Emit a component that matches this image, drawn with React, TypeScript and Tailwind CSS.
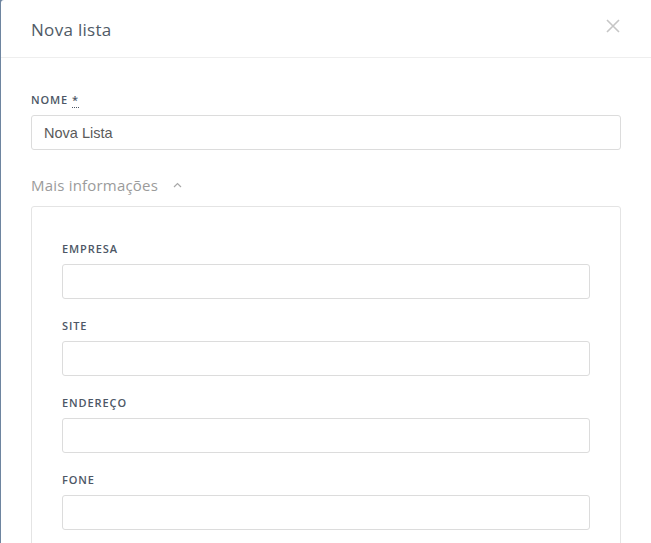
import React from 'react'

const labelClass = "block text-[11px] leading-[16px] font-semibold uppercase tracking-[0.9px] text-[#4d5766]"
const inputClass = "block w-full h-[35px] rounded-[3px] border border-[#dcdcdc] bg-white px-[12px] text-[14.5px] text-[#5a5a5a] outline-none"

function Field({ label, value = '' }: { label: string; value?: string }) {
  return (
    <div>
      <label className={labelClass}>{label}</label>
      <input className={`${inputClass} mt-[7px]`} defaultValue={value} />
    </div>
  )
}

export default function App() {
  return (
    <div className="w-[651px] h-[543px] overflow-hidden bg-[#6e85a0] pl-[1px]" style={{ fontFamily: '"Open Sans", sans-serif' }}>
      <div className="h-full bg-white rounded-tl-[3px]">
        <div className="h-[58px] flex items-center justify-between pl-[30px] pr-[30px] border-b border-[#eeeeee]">
          <h2 className="text-[17px] text-[#505a66] tracking-[0.3px] pt-[3px]">Nova lista</h2>
          <button className="text-[#c6c6c6] -mt-[6px] mr-[1px]">
            <svg width="14" height="14" viewBox="0 0 14 14" fill="none" stroke="currentColor" strokeWidth="1.6">
              <path d="M1 1l12 12M13 1L1 13" />
            </svg>
          </button>
        </div>
        <div className="px-[30px] pt-[34px]">
          <div>
            <label className={labelClass}>
              Nome <abbr title="obrigatório" className="no-underline border-b border-dotted border-[#4d5766]">*</abbr>
            </label>
            <input className={`${inputClass} mt-[7px]`} style={{ fontFamily: '"Liberation Sans", sans-serif' }} defaultValue="Nova Lista" />
          </div>
          <button className="mt-[25px] flex items-center gap-[15px] text-[15px] leading-[20px] tracking-[0.2px] text-[#9b9b9b]">
            Mais informações
            <svg width="9" height="6" viewBox="0 0 9 6" fill="none" stroke="#a8a8a8" strokeWidth="1.2">
              <path d="M1 5l3.5-3.5L8 5" />
            </svg>
          </button>
          <div className="mt-[11px] border border-[#e4e4e4] rounded-[3px] px-[30px] pt-[34px] pb-[30px] flex flex-col gap-[19px]">
            <Field label="Empresa" />
            <Field label="Site" />
            <Field label="Endereço" />
            <Field label="Fone" />
          </div>
        </div>
      </div>
    </div>
  )
}
